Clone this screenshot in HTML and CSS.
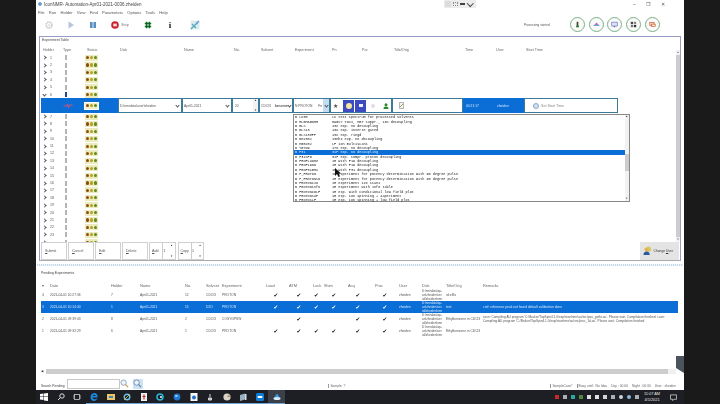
FILE: index.html
```
<!DOCTYPE html>
<html>
<head>
    <title>IconNMR Automation</title>
    <link rel="stylesheet" href="styles.css">
</head>
<body>
    <div class="window">
        <!-- Title bar -->
        <div class="titlebar">
            <svg class="app-icon" viewBox="0 0 6 6"><circle cx="3" cy="3" r="2.6" fill="#2a6fb5"/><circle cx="3" cy="3" r="1" fill="#dfe9f5"/></svg>
            <span class="app-title">IconNMR- Automation-Apr01-2021-0036.zheiden</span>
            <div class="float-tools"><i class="ft-box"></i><i class="ft-grid"></i><i class="ft-dash"></i><span class="ft-chev"></span></div>
            <div class="win-controls"><span>&#8211;</span><span>&#10064;</span><span>&#10005;</span></div>
        </div>

        <div class="menubar">
            <span>File</span><span>Run</span><span>Holder</span><span>View</span><span>Find</span><span>Parameters</span><span>Options</span><span>Tools</span><span>Help</span>
        </div>

        <!-- Toolbar -->
        <div class="toolbar">
            <svg class="tool" viewBox="0 0 8 8"><circle cx="4" cy="4" r="3" fill="none" stroke="#c4c8cc" stroke-width="1.6" stroke-dasharray="1.2 .5"/><circle cx="4" cy="4" r="1.6" fill="#e4e6e8"/></svg>
            <svg class="tool" viewBox="0 0 8 8"><path d="M1.5 .5 7 4 1.5 7.5z" fill="#b4c6de"/></svg>
            <svg class="tool" viewBox="0 0 8 8"><rect x="1" y="1" width="2.6" height="6" fill="#5b8fc4"/><rect x="4.4" y="1" width="2.6" height="6" fill="#5b8fc4"/></svg>
            <svg class="tool" viewBox="0 0 8 8"><circle cx="4" cy="4" r="3.8" fill="#c9202c"/><rect x="2.2" y="2.6" width="3.6" height="2.8" fill="#f0d8d8"/></svg>
            <span class="tool-label">Stop</span>
            <svg class="tool" viewBox="0 0 8 8"><path d="M2.6 .8v6.4M5.4 .8v6.4M.8 2.6h6.4M.8 5.4h6.4" stroke="#0e6a22" stroke-width="1.5"/></svg>
            <span class="tool-info">i</span>
            <svg class="tool tool-wide" viewBox="0 0 10 10"><rect x=".5" y=".5" width="9" height="9" fill="#dcebf0"/><path d="M1 9 9 1M2 4l4 4" stroke="#58a8b8" stroke-width="1.3"/><circle cx="7" cy="3" r="1.2" fill="#7aa0d0"/></svg>
            <span class="processing">Processing started</span>
            <div class="round-btns">
                <div class="round"><svg viewBox="0 0 9 9"><rect x="3.4" y="1" width="2.2" height="7" fill="#3c4a30"/><rect x="2.6" y="6" width="3.8" height="2" fill="#2e8a3a"/></svg></div>
                <div class="round"><svg viewBox="0 0 9 9"><path d="M.5 6 4.5 2 8.5 6z" fill="#c070c8"/><rect x="1" y="5" width="7" height="1.4" fill="#58b0d8"/></svg></div>
                <div class="round"><svg viewBox="0 0 9 9"><rect x="1" y="1.5" width="7" height="5" fill="#dfe4f4" stroke="#5a68b8" stroke-width=".8"/><rect x="3.6" y="6.5" width="1.8" height="1.5" fill="#5a68b8"/></svg></div>
                <div class="round"><svg viewBox="0 0 9 9"><rect x="1" y="1" width="3" height="3" fill="#444"/><rect x="5" y="1" width="3" height="3" fill="#888"/><rect x="1" y="5" width="3" height="3" fill="#777"/><rect x="5" y="5" width="3" height="3" fill="#333"/></svg></div>
                <div class="round"><svg viewBox="0 0 9 9"><rect x="1" y="2" width="5.5" height="4" fill="#f4e0b8" stroke="#c84a2a" stroke-width=".8"/><rect x="3" y="4" width="5" height="3" fill="#f8eccc" stroke="#c84a2a" stroke-width=".8"/></svg></div>
            </div>
        </div>

        <!-- Experiment table -->
        <div class="panel">
            <div class="panel-title">Experiment Table</div>
            <div class="panel-main">
                <div class="exp-table">
                    <div class="exp-head">
                        <span>Holder</span><span>Type</span><span class="status-h">Status</span><span>Disk</span><span>Name</span><span>No.</span><span>Solvent</span><span>Experiment</span><span>Pn</span><span>Par</span><span>Title/Orig</span><span>Time</span><span>User</span><span>Start Time</span>
                    </div>
                    <div class="exp-body">
                        <div class="hrow"><b class="chev"></b><span class="hnum">1</span><i class="tube"></i><div class="lights"><i></i><i></i><i></i></div></div>
                        <div class="hrow"><b class="chev"></b><span class="hnum">2</span><i class="tube"></i><div class="lights"><i></i><i></i><i></i></div></div>
                        <div class="hrow"><b class="chev"></b><span class="hnum">3</span><i class="tube"></i><div class="lights"><i></i><i></i><i></i></div></div>
                        <div class="hrow"><b class="chev"></b><span class="hnum">4</span><i class="tube"></i><div class="lights"><i></i><i></i><i></i></div></div>
                        <div class="hrow"><b class="chev"></b><span class="hnum">5</span><i class="tube"></i><div class="lights"><i></i><i></i><i></i></div></div>
                        <div class="hrow"><b class="chev open"></b><span class="hnum">6</span><i class="tube tube-blue"></i><div class="lights"><i></i><i></i><i></i></div></div>

                        <!-- Row being edited -->
                        <div class="edit-row">
                            <div class="edit-head">
                                <svg class="flame" viewBox="0 0 10 6"><path d="M.5 3h3l1-2 1 4 1-3h3" fill="none" stroke="#e8506a" stroke-width=".9"/></svg>
                                <div class="lights lights-on"><i></i><i></i><i></i></div>
                            </div>
                            <div class="cell cell-disk">D:\nmrdata\user\zheiden<b class="caret"></b></div>
                            <div class="cell cell-name">Apr01-2021<b class="caret"></b></div>
                            <div class="cell cell-no">20<span class="spin"><b>&#9650;</b><b>&#9660;</b></span></div>
                            <div class="cell cell-solvent"><span>CDCl3</span><strong>benzene</strong><b class="caret"></b></div>
                            <div class="cell cell-exp">N PROTON<span class="exp-fn">Fn</span><span class="exp-drop"><b class="caret"></b></span></div>
                            <div class="cell cell-par">
                                <span class="star">&#9733;</span>
                                <span class="sq"><i class="sun"></i></span>
                                <span class="sq"><i class="doc"></i></span>
                                <i class="pale"></i>
                                <svg class="person" viewBox="0 0 6 6"><circle cx="3" cy="1.8" r="1.5" fill="#2a8a2a"/><path d="M.5 6c0-2 1-2.6 2.5-2.6S5.500 4 5.500 6z" fill="#2a8a2a"/></svg>
                            </div>
                            <div class="cell cell-title"><svg class="file" viewBox="0 0 5 7"><path d="M.5.5h4v6h-4z" fill="#f4f4ea" stroke="#888" stroke-width=".6"/><path d="M1 5 4 2" stroke="#6a8a3a" stroke-width=".7"/></svg></div>
                            <div class="cell cell-time"><span>00:21:17</span><span>zheiden</span></div>
                            <div class="cell cell-start"><i class="clock"></i>Set Start Time</div>
                        </div>

                        <div class="hrow"><b class="chev"></b><span class="hnum">7</span><i class="tube"></i><div class="lights"><i></i><i></i><i></i></div></div>
                        <div class="hrow"><b class="chev"></b><span class="hnum">8</span><i class="tube"></i><div class="lights"><i></i><i></i><i></i></div></div>
                        <div class="hrow"><b class="chev"></b><span class="hnum">9</span><i class="tube"></i><div class="lights"><i></i><i></i><i></i></div></div>
                        <div class="hrow"><b class="chev"></b><span class="hnum">10</span><i class="tube"></i><div class="lights"><i></i><i></i><i></i></div></div>
                        <div class="hrow"><b class="chev"></b><span class="hnum">11</span><i class="tube"></i><div class="lights"><i></i><i></i><i></i></div></div>
                        <div class="hrow"><b class="chev"></b><span class="hnum">12</span><i class="tube"></i><div class="lights"><i></i><i></i><i></i></div></div>
                        <div class="hrow"><b class="chev"></b><span class="hnum">13</span><i class="tube"></i><div class="lights"><i></i><i></i><i></i></div></div>
                        <div class="hrow"><b class="chev"></b><span class="hnum">14</span><i class="tube"></i><div class="lights"><i></i><i></i><i></i></div></div>
                        <div class="hrow"><b class="chev"></b><span class="hnum">15</span><i class="tube"></i><div class="lights"><i></i><i></i><i></i></div></div>
                        <div class="hrow"><b class="chev"></b><span class="hnum">16</span><i class="tube"></i><div class="lights"><i></i><i></i><i></i></div></div>
                        <div class="hrow"><b class="chev"></b><span class="hnum">17</span><i class="tube"></i><div class="lights"><i></i><i></i><i></i></div></div>
                        <div class="hrow"><b class="chev"></b><span class="hnum">18</span><i class="tube"></i><div class="lights"><i></i><i></i><i></i></div></div>
                        <div class="hrow"><b class="chev"></b><span class="hnum">19</span><i class="tube"></i><div class="lights"><i></i><i></i><i></i></div></div>
                        <div class="hrow"><b class="chev"></b><span class="hnum">20</span><i class="tube"></i><div class="lights"><i></i><i></i><i></i></div></div>
                        <div class="hrow"><b class="chev"></b><span class="hnum">21</span><i class="tube"></i><div class="lights"><i></i><i></i><i></i></div></div>
                        <div class="hrow"><b class="chev"></b><span class="hnum">22</span><i class="tube"></i><div class="lights"><i></i><i></i><i></i></div></div>
                        <div class="hrow"><b class="chev"></b><span class="hnum">23</span><i class="tube"></i><div class="lights"><i></i><i></i><i></i></div></div>
                        <div class="hrow"><b class="chev"></b><span class="hnum"></span><i class="tube"></i><div class="lights"><i></i><i></i><i></i></div></div>
                    </div>
                </div>
                <div class="vscroll"><b>&#9650;</b><i></i><b>&#9660;</b></div>
            </div>
            <div class="panel-buttons">
                <div class="btn"><u>S</u>ubmit</div>
                <div class="btn"><u>C</u>ancel</div>
                <div class="btn"><u>E</u>dit</div>
                <div class="btn"><u>D</u>elete</div>
                <div class="btn-spin"><span class="bs-label"><u>A</u>dd</span><span class="bs-val">1</span><span class="spin"><b>&#9650;</b><b>&#9660;</b></span></div>
                <div class="btn-spin"><span class="bs-label"><u>C</u>opy</span><span class="bs-val">1</span><span class="spin"><b>&#9650;</b><b>&#9660;</b></span></div>
                <div class="btn-user">
                    <svg viewBox="0 0 10 10"><circle cx="6" cy="3.500" r="3" fill="#d8c860"/><circle cx="3.500" cy="4" r="2" fill="#e8b050"/><path d="M.5 10c0-3 1.500-4 3.500-4s3.500 1 3.500 4z" fill="#2a5aa0"/></svg>
                    <span>Change <u>U</u>ser</span>
                </div>
            </div>
        </div>

        <div class="splitter"></div>

        <!-- Pending experiments -->
        <div class="pending">
            <div class="pending-title">Pending Experiments</div>
            <div class="prow phead">
                <span>&#9662;</span><span>Date</span><span>Holder</span><span>Name</span><span>No.</span><span>Solvent</span><span>Experiment</span><span>Load</span><span>ATM</span><span>Lock</span><span>Shim</span><span>Acq</span><span>Proc</span><span>User</span><span>Disk</span><span>Title/Orig</span><span>Remarks</span>
            </div>
            <div class="prow">
                <span>4</span><span>2021-04-01 10:27:36</span><span>7</span><span>Apr01-2021</span><span>12</span><span>CDCl3</span><span>PROTON</span><span class="ok">&#10004;</span><span class="ok">&#10004;</span><span class="ok ok-tight">&#10004;</span><span class="ok">&#10004;</span><span class="ok">&#10004;</span><span class="ok">&#10004;</span><span>zheiden</span><span class="disk">D:\nmrdata\qu-<br>an\zheiden\ser<br>ial\zheiden\nmr</span><span>rd.efflo</span><span></span>
            </div>
            <div class="prow prow-sel">
                <span>3</span><span>2021-04-01 10:14:40</span><span>1</span><span>Apr01-2021</span><span>15</span><span>D2O</span><span>PROTON</span><span class="ok">&#10004;</span><span class="ok">&#10004;</span><span class="ok ok-tight">&#10004;</span><span class="ok">&#10004;</span><span class="ok">&#10004;</span><span class="ok">&#10004;</span><span>zheiden</span><span class="disk">D:\nmrdata\qu-<br>an\zheiden\ser<br>ial\zheiden\nmr</span><span>test</span><span>cref: reference peak not found default calibration done</span>
            </div>
            <div class="prow">
                <span>2</span><span>2021-04-01 09:39:43</span><span>8</span><span>Apr01-2021</span><span>2</span><span>CDCl3</span><span>COSYGPSW</span><span></span><span class="ok">&#10004;</span><span></span><span></span><span class="ok">&#10004;</span><span class="ok">&#10004;</span><span>zheiden</span><span class="disk">D:\nmrdata\qu-<br>an\zheiden\ser<br>ial\zheiden\nmr</span><span>Ethylbenzene in CDCl3</span><span class="remark">cavn: Compiling AU program 'C:/Bruker/TopSpin4.1.0/exp/stan/nmr/au/src/pau_getfo.au'. Please wait. Compilation finished. cavn: Compiling AU program 'C:/Bruker/TopSpin4.1.0/exp/stan/nmr/au/src/proc_1d.au'. Please wait. Compilation finished</span>
            </div>
            <div class="prow">
                <span>1</span><span>2021-04-01 09:32:29</span><span>6</span><span>Apr01-2021</span><span>1</span><span>CDCl3</span><span>PROTON</span><span class="ok">&#10004;</span><span class="ok">&#10004;</span><span class="ok ok-tight">&#10004;</span><span class="ok">&#10004;</span><span class="ok">&#10004;</span><span class="ok">&#10004;</span><span>zheiden</span><span class="disk">D:\nmrdata\qu-<br>an\zheiden\ser<br>ial\zheiden\nmr</span><span>Ethylbenzene in CDCl3</span><span></span>
            </div>
            <div class="hscroll"><b>&#9664;</b><i></i></div>
            <div class="searchbar">
                <span class="search-label">Search Pending</span>
                <div class="search-input"></div>
                <div class="search-btn"><svg viewBox="0 0 10 10"><circle cx="4" cy="4" r="3" fill="#eaf2fa" stroke="#8aa4c0"/><path d="M6 6l3 3" stroke="#c09a50" stroke-width="1.300"/></svg></div>
                <div class="search-btn search-btn-on"><svg viewBox="0 0 10 10"><circle cx="4" cy="4" r="3" fill="#eaf2fa" stroke="#6a8cb0"/><path d="M6 6l3 3" stroke="#5a80a8" stroke-width="1.300"/></svg></div>
                <div class="statusbar">
                    <span class="st-sample">Sample: ?</span>
                    <span class="st-case">SampleCase*</span>
                    <span class="st-busy">Busy until: &nbsp;No Idea</span>
                    <span>Day : 00:00</span><span>Night : 00:30</span><span>User : zheiden</span>
                </div>
            </div>
        </div>

        <!-- Experiment dropdown open over the table -->
        <div class="exp-list">
            <div class="list-rows">
                <div class="li"><span>B LC50</span><span>LC test spectrum for processed solvents</span></div>
                <div class="li"><span>B HLBMAGNMR</span><span>MAGSY TOXI, MBT suppr., 13C decoupling</span></div>
                <div class="li"><span>B BLS</span><span>13C exp. no decoupling</span></div>
                <div class="li"><span>B BLS13</span><span>13C exp. inverse gated</span></div>
                <div class="li"><span>B BLS13MPP</span><span>13C exp. ringd</span></div>
                <div class="li"><span>B BM2302</span><span>13Mhz exp. no decoupling</span></div>
                <div class="li"><span>B MG0202</span><span>LF ion multiscans</span></div>
                <div class="li"><span>B YG7D9</span><span>17O exp. no decoupling</span></div>
                <div class="li li-sel"><span>B P31</span><span>31P exp. no decoupling</span></div>
                <div class="li"><span>B P31CPD</span><span>31P exp. compr. proton decoupling</span></div>
                <div class="li"><span>B PROFLUOMZ</span><span>1H with F19 decoupling</span></div>
                <div class="li"><span>B PROF19ND</span><span>1H with F19 decoupling</span></div>
                <div class="li"><span>B PROF31GMX</span><span>1H with P31 decoupling</span></div>
                <div class="li"><span>B P_PROTON</span><span>1H experiment for potency determination with 90 degree pulse</span></div>
                <div class="li"><span>B P_PROTONSN</span><span>1H experiment for potency determination with 90 degree pulse</span></div>
                <div class="li"><span>B PROTON128</span><span>1H experiment 128 scans</span></div>
                <div class="li"><span>B PROTONinfo</span><span>1H experiment with info table</span></div>
                <div class="li"><span>B PROTONCOLF</span><span>1H exp. with conditional low field plot</span></div>
                <div class="li"><span>B PROTONSUP</span><span>1H exp. ion spinning + 4aperiment</span></div>
                <div class="li"><span>B PROTOSLF</span><span>1H exp. ion spinning + low field plot</span></div>
            </div>
            <div class="list-scroll"><b>&#9650;</b><i></i><b>&#9660;</b></div>
        </div>
        <svg class="cursor" viewBox="0 0 6 9"><path d="M0 0v8l2-2 1.500 3 1.500-.7L3.500 5.500H6z" fill="#111"/></svg>
        <div class="corner-badge"></div>
    </div>

    <!-- Windows taskbar -->
    <div class="taskbar">
        <div class="tb-apps">
            <div class="tb"><svg viewBox="0 0 8 8"><path d="M0 1l3.500-.5v3H0zM4 .4 8 0v3.500H4zM0 4h3.500v3L0 6.500zM4 4h4v4l-4-.5z" fill="#fff"/></svg></div>
            <div class="tb"><svg viewBox="0 0 8 8"><circle cx="5" cy="3" r="2.200" fill="none" stroke="#ddd"/><path d="M3.300 4.700 1 7" stroke="#ddd"/></svg></div>
            <div class="tb"><svg viewBox="0 0 8 8"><rect x="1.500" y="1.500" width="5" height="5" fill="none" stroke="#ccc" stroke-width=".8"/><path d="M0 2v4M8 2v4" stroke="#ccc" stroke-width=".8"/></svg></div>
            <div class="tb tb-run"><svg viewBox="0 0 8 8"><path d="M7.500 5C7 7 5.500 8 4 8 1.500 8 .5 6 .5 4 .5 1.500 2.500 0 4.500 0 6.500 0 8 1.500 7.500 4.500H2.500c.2 2 3 2.300 5 .5zM2.700 3h3C5.500 1.500 3.300 1.500 2.700 3z" fill="#1a86d8"/></svg></div>
            <div class="tb tb-run"><svg viewBox="0 0 8 8"><rect y="1" width="8" height="6" fill="#e8c768"/><rect x="2" y="3" width="4" height="2" fill="#4a80b8"/></svg></div>
            <div class="tb tb-run"><svg viewBox="0 0 8 8"><circle cx="4" cy="4" r="2.800" fill="none" stroke="#6ac0e8" stroke-width="1.400"/><path d="M1 7 7 1" stroke="#e8c040" stroke-width=".8"/></svg></div>
            <div class="tb tb-run"><svg viewBox="0 0 8 8"><rect x="1" width="6" height="8" fill="#f2f2f2"/><path d="M4 1.500v5M2.500 3.500h3" stroke="#c82a2a" stroke-width="1.200"/></svg></div>
            <div class="tb tb-run"><svg viewBox="0 0 8 8"><circle cx="4" cy="4" r="3" fill="none" stroke="#28b8d8" stroke-width="1.500"/><circle cx="5" cy="4" r="1" fill="#e8f4f8"/></svg></div>
            <div class="tb tb-run"><svg viewBox="0 0 8 8"><circle cx="4" cy="4" r="3.400" fill="#1e78d0"/><ellipse cx="3.400" cy="3" rx="1.500" ry="1" fill="#9cd0f4"/></svg></div>
            <div class="tb tb-run"><svg viewBox="0 0 8 8"><rect x=".5" width="7" height="8" fill="#f4f8fc"/><circle cx="4" cy="4.500" r="2" fill="#2a70c8"/></svg></div>
            <div class="tb tb-run"><svg viewBox="0 0 8 8"><path d="M4 1v3M2.500 5h3v2h-3z" stroke="#d8d8d8" stroke-width="1" fill="#b0b0b0"/></svg></div>
            <div class="tb tb-run"><svg viewBox="0 0 8 8"><circle cx="4" cy="4" r="3.600" fill="#d8d4c8"/><path d="M4 4 6 1.500 7 4z" fill="#a08850"/></svg></div>
            <div class="tb tb-run"><svg viewBox="0 0 8 8"><path d="M1 2l5-1.500v6L1 8z" fill="#9ab0c0"/><path d="M6 1h1.500v6H6z" fill="#d0dce4"/></svg></div>
            <div class="tb tb-run"><svg viewBox="0 0 8 8"><rect width="8" height="8" rx="1.500" fill="#0e7ed8"/><rect x="1.500" y="3" width="5" height="2" rx="1" fill="#fff"/></svg></div>
            <div class="tb tb-run tb-active"><svg viewBox="0 0 8 8"><path d="M4 .5 7 5H1z" fill="#3a9ae8"/><ellipse cx="4" cy="5.500" rx="3.500" ry="1.500" fill="#d8ecf8"/></svg></div>
        </div>
        <div class="tray">
            <i class="ty ty-red"></i><i class="ty ty-grey"></i><i class="ty ty-teal"></i><i class="ty ty-green"></i><i class="ty ty-light"></i><i class="ty ty-light"></i><i class="ty ty-pale"></i><i class="ty ty-grey"></i><i class="ty ty-round ty-pale"></i><i class="ty ty-round ty-blue"></i><i class="ty ty-grey"></i>
            <div class="clock-text"><span>11:07 AM</span><span>4/1/2021</span></div>
            <svg class="notify" viewBox="0 0 8 8"><path d="M.5 1h7v5h-3L3 7.500V6H.5z" fill="none" stroke="#e8e8e8" stroke-width=".8"/></svg>
        </div>
    </div>
</body>
</html>
```
FILE: styles.css
```
html, body {
    margin: 0;
    padding: 0;
}

body {
    width: 720px;
    height: 404px;
    overflow: hidden;
    background-color: #1a1a1a;
    font-family: "Liberation Sans", Arial, sans-serif;
    font-size: 4.2px;
    color: #3a3a3a;
}

.window {
    position: relative;
    width: 648px;
    height: 390px;
    margin-left: 36px;
    background-color: #fff;
    display: flex;
    flex-direction: column;
    filter: blur(0.25px);
}

/* Title bar */
.titlebar {
    height: 8px;
    display: flex;
    align-items: center;
    font-size: 4.5px;
    color: #444;
}

.app-icon {
    width: 4px;
    height: 4px;
    margin: 0 2px 0 2px;
}

.app-title {
    width: 400px;
}

.float-tools {
    width: 32px;
    height: 8px;
    background: #ececec;
    display: flex;
    align-items: center;
    gap: 2px;
    padding-left: 1px;
    box-sizing: border-box;
}

.ft-box {
    width: 6px;
    height: 6px;
    background: #dcdcdc;
}

.ft-grid {
    width: 5px;
    height: 4px;
    border: 1px dotted #888;
    box-sizing: border-box;
}

.ft-dash {
    width: 5px;
    height: 1.5px;
    background: #444;
}

.ft-chev {
    width: 3.5px;
    height: 3.5px;
    border-right: 1px solid #444;
    border-bottom: 1px solid #444;
    transform: rotate(45deg);
    margin: -2px 0 0 1px;
}

.win-controls {
    display: flex;
    margin-left: 157px;
    gap: 10.5px;
    font-size: 5px;
    color: #555;
}

.menubar {
    height: 8px;
    display: flex;
    align-items: center;
    padding-left: 2px;
    gap: 4.2px;
    font-size: 4.1px;
    color: #555;
}

/* Toolbar */
.toolbar {
    height: 17px;
    display: flex;
    align-items: center;
    padding-left: 9px;
    gap: 14px;
}

.tool {
    width: 8px;
    height: 8px;
    flex: none;
}

.tool-wide {
    width: 10px;
    height: 10px;
    margin-left: 2px;
}

.tool-label {
    margin-left: -12px;
    width: 9px;
    color: #777;
    font-size: 3.8px;
}

.tool-info {
    width: 8px;
    text-align: center;
    font-family: "Liberation Serif", serif;
    font-weight: bold;
    font-size: 9px;
    color: #111;
}

.processing {
    margin-left: 310px;
    width: 24px;
    white-space: nowrap;
    font-size: 3.1px;
    color: #555;
}

.round-btns {
    display: flex;
    gap: 3.7px;
    margin-left: 8px;
}

.round {
    width: 15px;
    height: 15px;
    box-sizing: border-box;
    border: .7px solid #7ab088;
    border-radius: 50%;
    background: #fafafa;
    display: flex;
    align-items: center;
    justify-content: center;
}

.round svg {
    width: 7px;
    height: 7px;
}

/* Experiment table */
.panel {
    height: 225px;
    margin: 3px 3px 0 3px;
    box-sizing: border-box;
    border: 1px solid #9a9cc8;
    border-bottom: 1.5px solid #aaa;
    display: flex;
    flex-direction: column;
    padding-left: 1px;
}

.panel-title {
    height: 9px;
    line-height: 7px;
    font-size: 3.5px;
    padding-left: 1px;
    color: #444;
}

.panel-main {
    flex: 1;
    min-height: 0;
    display: flex;
}

.exp-table {
    width: 577px;
    display: flex;
    flex-direction: column;
    min-height: 0;
}

.exp-head {
    height: 8px;
    display: grid;
    grid-template-columns: 20px 20px 37px 64px 50px 27px 34px 37px 30px 32px 71px 31px 30px 94px;
    align-items: center;
    color: #666;
    font-size: 3.7px;
}

.exp-head span {
    padding-left: 2px;
}

.exp-head .status-h {
    padding-left: 6px;
}

.exp-body {
    flex: 1;
    overflow: hidden;
    min-height: 0;
}

.hrow {
    height: 7.4px;
    display: flex;
    align-items: center;
    font-size: 3.5px;
    color: #555;
}

.chev {
    width: 2px;
    height: 2px;
    border-top: .7px solid #555;
    border-right: .7px solid #555;
    transform: rotate(45deg);
    margin-left: 1.5px;
    flex: none;
}

.chev.open {
    transform: rotate(135deg);
}

.hnum {
    width: 14px;
    padding-left: 4px;
    box-sizing: border-box;
    margin-left: .5px;
}

.tube {
    width: 2.5px;
    height: 5px;
    background: #f4f4f4;
    border: .5px solid #b4b4b4;
    box-sizing: border-box;
    margin-left: 4.5px;
    flex: none;
}

.tube-blue {
    background: #2a4a90;
    border-color: #2a4a90;
}

.lights {
    width: 13px;
    height: 6px;
    background: #ecebbe;
    display: flex;
    align-items: center;
    justify-content: space-around;
    margin-left: 18px;
    flex: none;
}

.lights i {
    width: 3.2px;
    height: 3.2px;
    border-radius: 50%;
    background: #8a4a10;
}

.lights i:nth-child(2) {
    background: #b5a020;
}

.lights i:nth-child(3) {
    background: #5c8a20;
}

/* Row being edited */
.edit-row {
    height: 14.5px;
    display: flex;
    box-sizing: border-box;
}

.edit-head {
    width: 77px;
    background: #0a6ed6;
    display: flex;
    align-items: center;
    flex: none;
}

.flame {
    width: 10px;
    height: 6px;
    margin-left: 22px;
}

.lights-on {
    margin-left: 12px;
    outline: 1px solid #fff;
    background: #f0efc8;
}

.cell {
    box-sizing: border-box;
    height: 14.5px;
    border: 1px solid #3b7a98;
    border-left-width: .5px;
    border-right-width: .5px;
    display: flex;
    align-items: center;
    padding-left: 1px;
    font-size: 3.3px;
    position: relative;
    flex: none;
    color: #555;
}

.caret {
    width: 2px;
    height: 2px;
    border-right: .6px solid #555;
    border-bottom: .6px solid #555;
    transform: rotate(45deg);
    margin-left: auto;
    margin-right: 2px;
    margin-top: -1px;
    flex: none;
}

.cell-disk { width: 64px; }
.cell-name { width: 50px; }
.cell-no { width: 27px; padding-left: 2px; }
.cell-solvent { width: 34px; }
.cell-solvent strong { margin-left: 4px; font-weight: bold; color: #555; }
.cell-exp { width: 37px; padding-right: 0; }
.exp-fn { margin-left: auto; margin-right: 1px; }

.exp-drop {
    width: 6px;
    align-self: stretch;
    background: #c4dcf0;
    display: flex;
    align-items: center;
    justify-content: center;
}

.exp-drop .caret {
    margin: -1px 0 0 0;
}

.spin {
    display: flex;
    flex-direction: column;
    justify-content: space-between;
    align-self: stretch;
    margin-left: auto;
    width: 5px;
    background: #f2f2f2;
    font-size: 2.5px;
    text-align: center;
    color: #333;
    font-weight: normal;
    flex: none;
}

.spin b {
    font-weight: normal;
    line-height: 3px;
}

.cell-par { width: 62px; padding-left: 1px; }

.star {
    font-size: 6px;
    width: 11px;
    padding-left: 1px;
    color: #555;
    box-sizing: border-box;
}

.sq {
    width: 11px;
    height: 12px;
    background: #3c4cc0;
    margin-right: 1px;
    display: flex;
    align-items: center;
    justify-content: center;
    flex: none;
}

.sun {
    width: 6px;
    height: 6px;
    border-radius: 50%;
    background: #f4e8a0;
}

.doc {
    width: 4px;
    height: 3px;
    background: #eef;
}

.pale {
    width: 4px;
    height: 4px;
    border-radius: 50%;
    background: #e8d8ea;
    margin-left: 4px;
    flex: none;
}

.person {
    width: 6px;
    height: 6px;
    margin-left: 8px;
    flex: none;
}

.cell-title { width: 71px; padding-left: 6px; }

.file {
    width: 5px;
    height: 7px;
}

.cell-time {
    width: 61px;
    background: #0a6ed6;
    color: #cfe4fa;
    padding-left: 2px;
    border-color: #0a6ed6;
}

.cell-time span:first-child {
    width: 31px;
}

.cell-start {
    width: 94px;
    padding-left: 8px;
    color: #888;
    font-size: 3.6px;
}

.clock {
    width: 4px;
    height: 4px;
    border-radius: 50%;
    background: #cfe0f0;
    border: .5px solid #8aa8c8;
    margin-right: 2px;
    flex: none;
}

.vscroll {
    width: 5px;
    margin: 4px 0 0 58px;
    background: #f2f2f2;
    display: flex;
    flex-direction: column;
    font-size: 2.5px;
    text-align: center;
    color: #555;
}

.vscroll b {
    font-weight: normal;
    height: 5px;
    line-height: 5px;
}

.vscroll i {
    flex: 1;
    background: #cdcdcd;
}

.panel-buttons {
    height: 18px;
    display: flex;
    gap: 1px;
    padding-bottom: .5px;
    font-size: 3.6px;
    color: #555;
}

.btn {
    width: 26px;
    border: .6px solid #d0d0d0;
    box-sizing: border-box;
    display: flex;
    align-items: center;
    padding-left: 3px;
    white-space: pre;
}

.btn-spin {
    width: 26.5px;
    display: flex;
    border: .6px solid #d0d0d0;
    box-sizing: border-box;
    align-items: center;
}

.btn-spin + .btn-spin {
    margin-left: 1px;
}

.bs-label {
    width: 13px;
    padding-left: 2px;
    box-sizing: border-box;
    align-self: stretch;
    display: flex;
    align-items: center;
    border-right: .6px solid #ccc;
    white-space: pre;
}

.bs-val {
    padding-left: .5px;
}

.panel-buttons .spin {
    background: #fff;
    font-size: 2.6px;
    width: 6px;
    padding: 1px 0;
}

.btn-user {
    width: 39px;
    margin-left: auto;
    margin-right: 1.5px;
    background: #e4e4e4;
    display: flex;
    align-items: center;
    gap: 2px;
    padding-left: 3px;
    box-sizing: border-box;
    white-space: pre;
    font-size: 3.3px;
    color: #333;
}

.btn-user svg {
    width: 9px;
    height: 9px;
    flex: none;
}

.splitter {
    height: 2px;
    margin: 3px 1px 0 1px;
    background: repeating-linear-gradient(90deg, #c4d8ea 0 1px, #eef4f9 1px 2px);
}

/* Pending experiments */
.pending {
    flex: 1;
    min-height: 0;
    display: flex;
    flex-direction: column;
    padding: 0 6px 0 5px;
}

.pending-title {
    height: 16px;
    line-height: 15px;
    font-size: 3.5px;
    color: #444;
}

.prow {
    height: 12px;
    display: grid;
    grid-template-columns: 8px 61px 29px 45px 21px 16px 44px 23px 24px 11px 24px 27px 24px 23px 24px 37px 1fr;
    align-items: center;
    padding-left: 1px;
    font-size: 3.3px;
    color: #555;
}

.prow > span {
    white-space: nowrap;
}

.phead {
    height: 7px;
    font-size: 3.9px;
    color: #666;
}

.prow-sel {
    background: #0a6ed6;
    color: #d6e8fb;
}

.prow-sel .ok {
    color: #fff;
}

.ok {
    font-family: "DejaVu Sans", sans-serif;
    font-size: 5.5px;
    color: #111;
    padding-left: 7.5px;
}

.ok-tight {
    padding-left: 1px;
}

.prow > .disk {
    font-size: 3px;
    line-height: 4px;
}

.prow > .remark {
    white-space: normal;
    line-height: 4px;
    font-size: 3.2px;
    padding-right: 2px;
}

.hscroll {
    height: 5px;
    margin-top: auto;
    margin-right: 2px;
    display: flex;
    font-size: 3px;
    line-height: 5px;
}

.hscroll b {
    width: 5px;
    font-weight: normal;
}

.hscroll i {
    flex: 1;
    background: linear-gradient(90deg, #cdcdcd 98.7%, #f0f0f0 98.7%);
}

.searchbar {
    height: 16px;
    display: flex;
    align-items: center;
    padding-top: 4px;
    box-sizing: border-box;
    font-size: 3.3px;
}

.search-label {
    width: 26px;
    margin-top: 4px;
    white-space: nowrap;
}

.search-input {
    width: 53px;
    height: 10px;
    box-sizing: border-box;
    border: .7px solid #c8c8c8;
}

.search-btn {
    width: 10px;
    height: 10px;
    display: flex;
    margin-right: 3px;
}

.search-btn-on {
    background: #cfe2f4;
}

.search-btn svg {
    width: 9px;
    height: 9px;
}

.statusbar {
    margin-left: auto;
    margin-right: 2px;
    margin-top: 4px;
    display: flex;
    gap: 4px;
    color: #666;
}

.st-sample {
    width: 218px;
    border-left: .5px solid #999;
    padding-left: 1px;
    box-sizing: border-box;
}

.st-case,
.st-busy {
    border-left: .5px solid #999;
    padding-left: 1px;
}

/* Dropdown lying over the table */
.exp-list {
    position: absolute;
    left: 257px;
    top: 113.5px;
    width: 337px;
    height: 88.5px;
    box-sizing: border-box;
    border: .7px solid #888;
    background: #fff;
    display: flex;
    font-family: "Liberation Mono", monospace;
    font-size: 3.5px;
    color: #222;
}

.list-rows {
    flex: 1;
    padding-top: .8px;
}

.li {
    height: 4.38px;
    line-height: 4.38px;
    display: flex;
    white-space: nowrap;
    padding-left: 1px;
}

.li span:first-child {
    width: 37px;
    flex: none;
}

.li-sel {
    background: #0a6ed6;
    color: #d6e8fb;
}

.list-scroll {
    width: 4.5px;
    background: #f2f2f2;
    display: flex;
    flex-direction: column;
    font-size: 2.5px;
    text-align: center;
}

.list-scroll b {
    font-weight: normal;
    height: 4px;
    line-height: 4px;
}

.list-scroll b:first-child {
    margin-bottom: 35px;
}

.list-scroll i {
    height: 17px;
    background: #cdcdcd;
    margin-bottom: auto;
}

.cursor {
    position: absolute;
    left: 299px;
    top: 168px;
    width: 6px;
    height: 9px;
}

.corner-badge {
    position: absolute;
    left: 640px;
    top: 356px;
    width: 8px;
    height: 17px;
    background: #4b535c;
    clip-path: polygon(0 0, 100% 0, 100% 100%, 0 70%);
}

/* Taskbar */
.taskbar {
    width: 648px;
    height: 14px;
    margin-left: 36px;
    background: #1d1f24;
    display: flex;
    justify-content: space-between;
}

.tb-apps {
    display: flex;
}

.tb {
    width: 16.6px;
    height: 14px;
    box-sizing: border-box;
    display: flex;
    align-items: center;
    justify-content: center;
}

.tb svg {
    width: 8px;
    height: 8px;
}

.tb-run {
    border-bottom: 1px solid #6fa8d8;
}

.tb-active {
    background: #3b4048;
}

.tray {
    display: flex;
    align-items: center;
    gap: 3.5px;
    padding-right: 7px;
}

.ty {
    width: 4.5px;
    height: 4.5px;
    flex: none;
}

.ty-round { border-radius: 50%; }
.ty-red { background: #c8282c; }
.ty-grey { background: #aab0b6; }
.ty-teal { background: #2aa8a0; }
.ty-green { background: #4a8a3a; }
.ty-light { background: #e0e0e0; }
.ty-pale { background: #d0d4d8; }
.ty-blue { background: #8ab8e0; }

.clock-text {
    display: flex;
    flex-direction: column;
    align-items: center;
    width: 19px;
    font-size: 3.9px;
    line-height: 6px;
    color: #e8e8e8;
}

.notify {
    width: 7px;
    height: 7px;
    margin-left: 5px;
}
```
